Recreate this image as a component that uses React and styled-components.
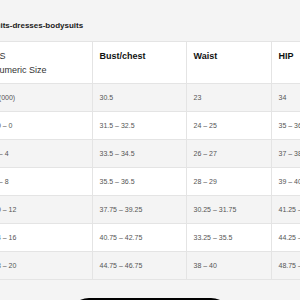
import React from "react";
import styled, { createGlobalStyle } from "styled-components";

const Global = createGlobalStyle`
  html, body { margin: 0; padding: 0; background: #f4f4f4; overflow: hidden; }
  body { font-family: "Liberation Sans", Arial, Helvetica, sans-serif; }
`;

const Page = styled.div`
  width: 300px;
  height: 300px;
  overflow: hidden;
  display: flex;
  flex-direction: column;
`;

const Content = styled.div`
  margin-left: -14px;
  display: flex;
  flex-direction: column;
`;

const Title = styled.h2`
  margin: 21px 0 10px 0;
  font-size: 8px;
  line-height: 10px;
  font-weight: 700;
  color: #1a1a1a;
  white-space: nowrap;
  text-indent: -14px;
`;

const Table = styled.table`
  border-collapse: collapse;
  table-layout: fixed;
  width: 366px;
`;

const Col = styled.col`
  width: ${(p) => p.$w}px;
`;

const HeadRow = styled.tr`
  background: #ffffff;
  height: 42px;
`;

const Th = styled.th`
  border: 1px solid #e4e4e4;
  border-left: ${(p) => (p.$first ? "none" : "1px solid #e4e4e4")};
  padding: 7px 7px 0 7px;
  vertical-align: top;
  text-align: left;
  font-size: 9px;
  line-height: 14px;
  font-weight: ${(p) => (p.$regular ? 400 : 700)};
  color: ${(p) => (p.$regular ? "#333" : "#111")};
  white-space: nowrap;
`;

const Row = styled.tr`
  background: ${(p) => (p.$alt ? "#f4f4f4" : "#ffffff")};
  height: 28px;
`;

const Td = styled.td`
  border: 1px solid #e4e4e4;
  border-left: ${(p) => (p.$first ? "none" : "1px solid #e4e4e4")};
  padding: 0 7px;
  vertical-align: middle;
  font-size: 7px;
  line-height: 10px;
  color: #555;
  white-space: nowrap;
`;

const Footer = styled.div`
  display: flex;
  justify-content: center;
  padding-top: 18px;
`;

const Button = styled.button`
  width: 166px;
  height: 44px;
  border: none;
  border-radius: 22px;
  background: #000;
  color: #fff;
  font-family: inherit;
  font-size: 9px;
  font-weight: 700;
`;

const rows = [
  ["0 (000)", "30.5", "23", "34"],
  ["00 – 0", "31.5 – 32.5", "24 – 25", "35 – 36"],
  ["2 – 4", "33.5 – 34.5", "26 – 27", "37 – 38"],
  ["6 – 8", "35.5 – 36.5", "28 – 29", "39 – 40"],
  ["10 – 12", "37.75 – 39.25", "30.25 – 31.75", "41.25 – 42.75"],
  ["14 – 16", "40.75 – 42.75", "33.25 – 35.5", "44.25 – 46.25"],
  ["18 – 20", "44.75 – 46.75", "38 – 40", "48.75 – 50.75"],
];

export default function App() {
  return (
    <>
      <Global />
      <Page>
        <Content>
          <Title>jumpsuits-dresses-bodysuits</Title>
          <Table>
            <colgroup>
              <Col $w={106} />
              <Col $w={94} />
              <Col $w={85} />
              <Col $w={81} />
            </colgroup>
            <thead>
              <HeadRow>
                <Th $first $regular>
                  US
                  <br />
                  Numeric Size
                </Th>
                <Th>Bust/chest</Th>
                <Th>Waist</Th>
                <Th>HIP</Th>
              </HeadRow>
            </thead>
            <tbody>
              {rows.map((r, i) => (
                <Row key={i} $alt={i % 2 === 0}>
                  {r.map((c, j) => (
                    <Td key={j} $first={j === 0}>
                      {c}
                    </Td>
                  ))}
                </Row>
              ))}
            </tbody>
          </Table>
        </Content>
        <Footer>
          <Button>Close</Button>
        </Footer>
      </Page>
    </>
  );
}
